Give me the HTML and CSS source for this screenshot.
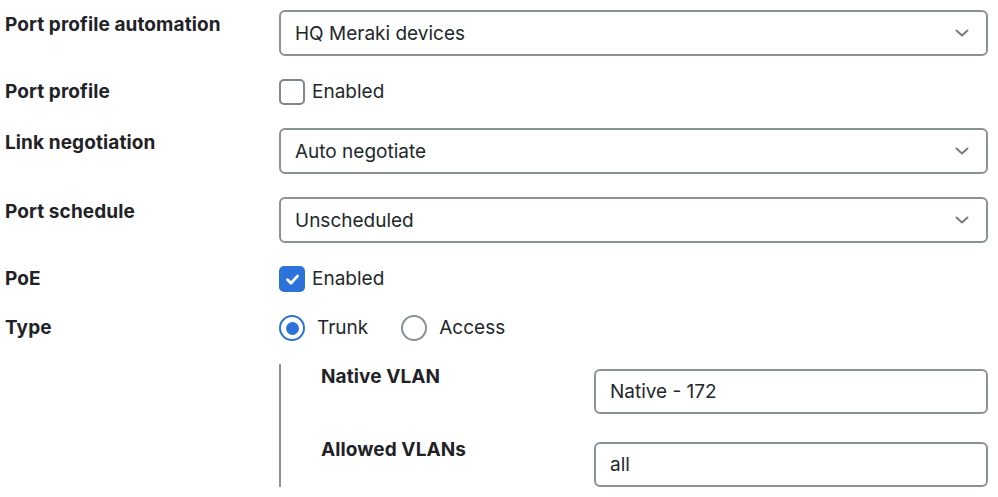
FILE: index.html
```html
<!DOCTYPE html>
<html lang="en">
<head>
<meta charset="utf-8">
<title>Port settings</title>
<link rel="stylesheet" href="styles.css">
</head>
<body>
<form class="form">
  <div class="row">
    <div class="label label-field">Port profile automation</div>
    <div class="control">
      <div class="select"><span>HQ Meraki devices</span>
        <svg class="chev" viewBox="0 0 14 8" width="14" height="8"><path d="M1.5 1.5 L7 6.5 L12.5 1.5" fill="none" stroke="#767c83" stroke-width="2" stroke-linecap="round" stroke-linejoin="round"/></svg>
      </div>
    </div>
  </div>
  <div class="row">
    <div class="label">Port profile</div>
    <div class="control">
      <label class="check"><span class="box"></span><span>Enabled</span></label>
    </div>
  </div>
  <div class="row">
    <div class="label label-field">Link negotiation</div>
    <div class="control">
      <div class="select"><span>Auto negotiate</span>
        <svg class="chev" viewBox="0 0 14 8" width="14" height="8"><path d="M1.5 1.5 L7 6.5 L12.5 1.5" fill="none" stroke="#767c83" stroke-width="2" stroke-linecap="round" stroke-linejoin="round"/></svg>
      </div>
    </div>
  </div>
  <div class="row">
    <div class="label label-field">Port schedule</div>
    <div class="control">
      <div class="select"><span>Unscheduled</span>
        <svg class="chev" viewBox="0 0 14 8" width="14" height="8"><path d="M1.5 1.5 L7 6.5 L12.5 1.5" fill="none" stroke="#767c83" stroke-width="2" stroke-linecap="round" stroke-linejoin="round"/></svg>
      </div>
    </div>
  </div>
  <div class="row">
    <div class="label">PoE</div>
    <div class="control">
      <label class="check"><span class="box checked"><svg viewBox="0 0 16 16" width="17" height="17"><path d="M3.3 8.3 L6.6 11.4 L12.7 4.8" fill="none" stroke="#fff" stroke-width="2.7" stroke-linecap="round" stroke-linejoin="round"/></svg></span><span>Enabled</span></label>
    </div>
  </div>
  <div class="row">
    <div class="label">Type</div>
    <div class="control radios">
      <label class="radio"><span class="dot checked"></span><span>Trunk</span></label>
      <label class="radio"><span class="dot"></span><span>Access</span></label>
    </div>
  </div>
  <div class="row">
    <div class="label"></div>
    <div class="sub">
      <div class="subrow">
        <div class="label">Native VLAN</div>
        <div class="field">Native - 172</div>
      </div>
      <div class="subrow">
        <div class="label">Allowed VLANs</div>
        <div class="field">all</div>
      </div>
    </div>
  </div>
</form>
</body>
</html>
```
FILE: styles.css
```css
* { box-sizing: border-box; }
html, body { margin: 0; padding: 0; background: #fff; }
body {
  font-family: Inter, "Noto Sans", sans-serif;
  color: #22272c;
  font-size: 19px;
}
.form {
  display: flex;
  flex-direction: column;
  gap: 23px;
  padding: 10px 10px 0 5px;
}
.row {
  display: grid;
  grid-template-columns: 274px 1fr;
  align-items: start;
}
.label {
  font-weight: 700;
  font-size: 19px;
  line-height: 26px;
  color: #1f2327;
  letter-spacing: 0.1px;
}
.label-field { padding-top: 2px; }
.control { min-width: 0; }
.select {
  height: 46px;
  border: 2px solid #8b9198;
  border-radius: 6px;
  display: flex;
  align-items: center;
  justify-content: space-between;
  padding: 0 17px 0 14px;
  line-height: 1;
}
.chev { display: block; }
.check {
  display: flex;
  align-items: center;
  gap: 7px;
  line-height: 26px;
}
.box {
  width: 26px;
  height: 26px;
  border: 2px solid #7f868d;
  border-radius: 5px;
  display: flex;
  align-items: center;
  justify-content: center;
}
.box.checked {
  background: #2b73db;
  border-color: #2b73db;
}
.radios {
  display: flex;
  gap: 33px;
}
.radio {
  display: flex;
  align-items: center;
  gap: 12px;
  line-height: 26px;
}
.dot {
  width: 26px;
  height: 26px;
  border: 2.5px solid #8b9198;
  border-radius: 50%;
  display: flex;
  align-items: center;
  justify-content: center;
}
.dot.checked { border-color: #2b73db; }
.dot.checked::after {
  content: "";
  width: 13px;
  height: 13px;
  border-radius: 50%;
  background: #2b73db;
}
.sub {
  border-left: 2px solid #8a9097;
  padding-left: 40px;
  display: flex;
  flex-direction: column;
  gap: 23px;
}
.subrow {
  display: grid;
  grid-template-columns: 273px 1fr;
  align-items: start;
}
.field {
  margin-top: 5px;
  height: 45px;
  border: 2px solid #8b9198;
  border-radius: 6px;
  display: flex;
  align-items: center;
  padding: 0 14px;
}
```
